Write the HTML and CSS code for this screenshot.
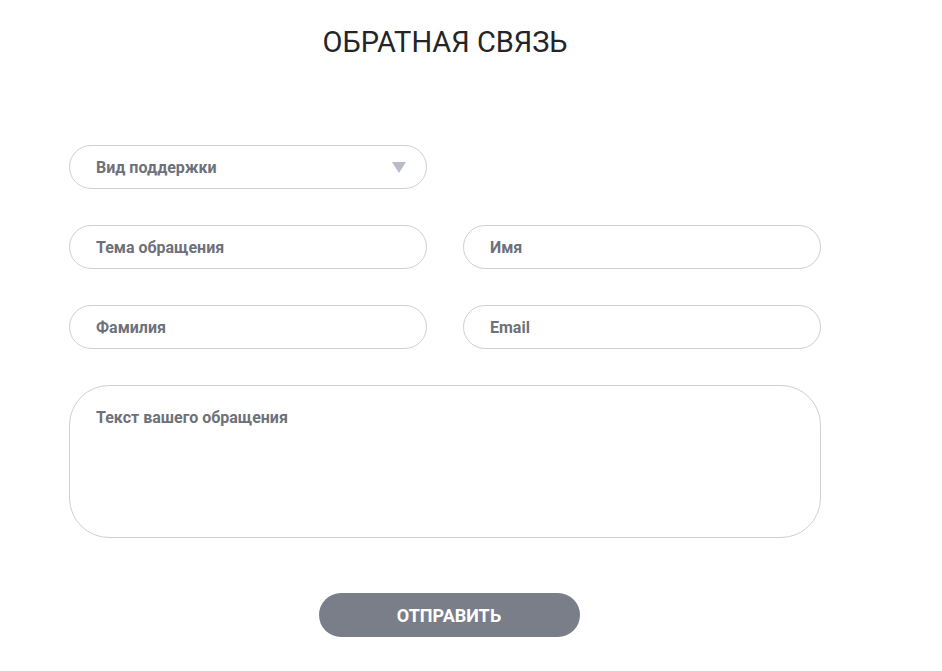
FILE: index.html
```html
<!DOCTYPE html>
<html lang="ru">
  <head>
    <meta charset="UTF-8" />
    <meta name="viewport" content="width=device-width, initial-scale=1.0" />
    <title>Обратная связь</title>
    <link rel="stylesheet" href="styles.css">
  </head>
  <body>
    <div class="feedback">
      <h1 class="feedback-title">Обратная связь</h1>

      <form class="feedback-form">
        <div class="row">
          <div class="field select">
            <span>Вид поддержки</span>
            <span class="arrow"></span>
          </div>
        </div>
        <div class="row">
          <div class="field">Тема обращения</div>
          <div class="field">Имя</div>
        </div>
        <div class="row">
          <div class="field">Фамилия</div>
          <div class="field">Email</div>
        </div>
        <div class="field message">Текст вашего обращения</div>

        <div class="actions">
          <button type="submit">Отправить</button>
        </div>
      </form>
    </div>
  </body>
</html>
```

FILE: styles.css
```css
body {
  margin: 0;
  padding: 0;
  font-family: "Roboto", "Liberation Sans", sans-serif;
  background-color: #fff;
  color: #222;
}

.feedback {
  width: 752px;
  margin-left: 69px;
}

.feedback-title {
  margin: 0;
  padding-top: 26px;
  text-align: center;
  font-size: 29px;
  font-weight: 400;
  line-height: 32px;
  text-transform: uppercase;
  color: #23252a;
}

.feedback-form {
  margin-top: 87px;
  display: flex;
  flex-direction: column;
  gap: 36px;
}

.row {
  display: flex;
  gap: 36px;
}

.field {
  box-sizing: border-box;
  width: 358px;
  height: 44px;
  border: 1px solid #cfd0d3;
  border-radius: 22px;
  padding: 0 26px;
  display: flex;
  align-items: center;
  justify-content: space-between;
  font-size: 16px;
  font-weight: 700;
  color: #6e717a;
}

.select {
  padding-right: 20px;
}

.arrow {
  width: 0;
  height: 0;
  border-left: 7px solid transparent;
  border-right: 7px solid transparent;
  border-top: 11px solid #b7bcc6;
}

.message {
  width: 752px;
  height: 153px;
  border-radius: 40px;
  align-items: flex-start;
  padding-top: 22px;
}

.actions {
  display: flex;
  justify-content: center;
  padding-top: 19px;
  padding-left: 8px;
}

.actions button {
  width: 261px;
  height: 44px;
  border: none;
  border-radius: 22px;
  background-color: #7a7e88;
  color: #fff;
  font-family: inherit;
  font-size: 18px;
  font-weight: 700;
  text-transform: uppercase;
  cursor: pointer;
}
```
